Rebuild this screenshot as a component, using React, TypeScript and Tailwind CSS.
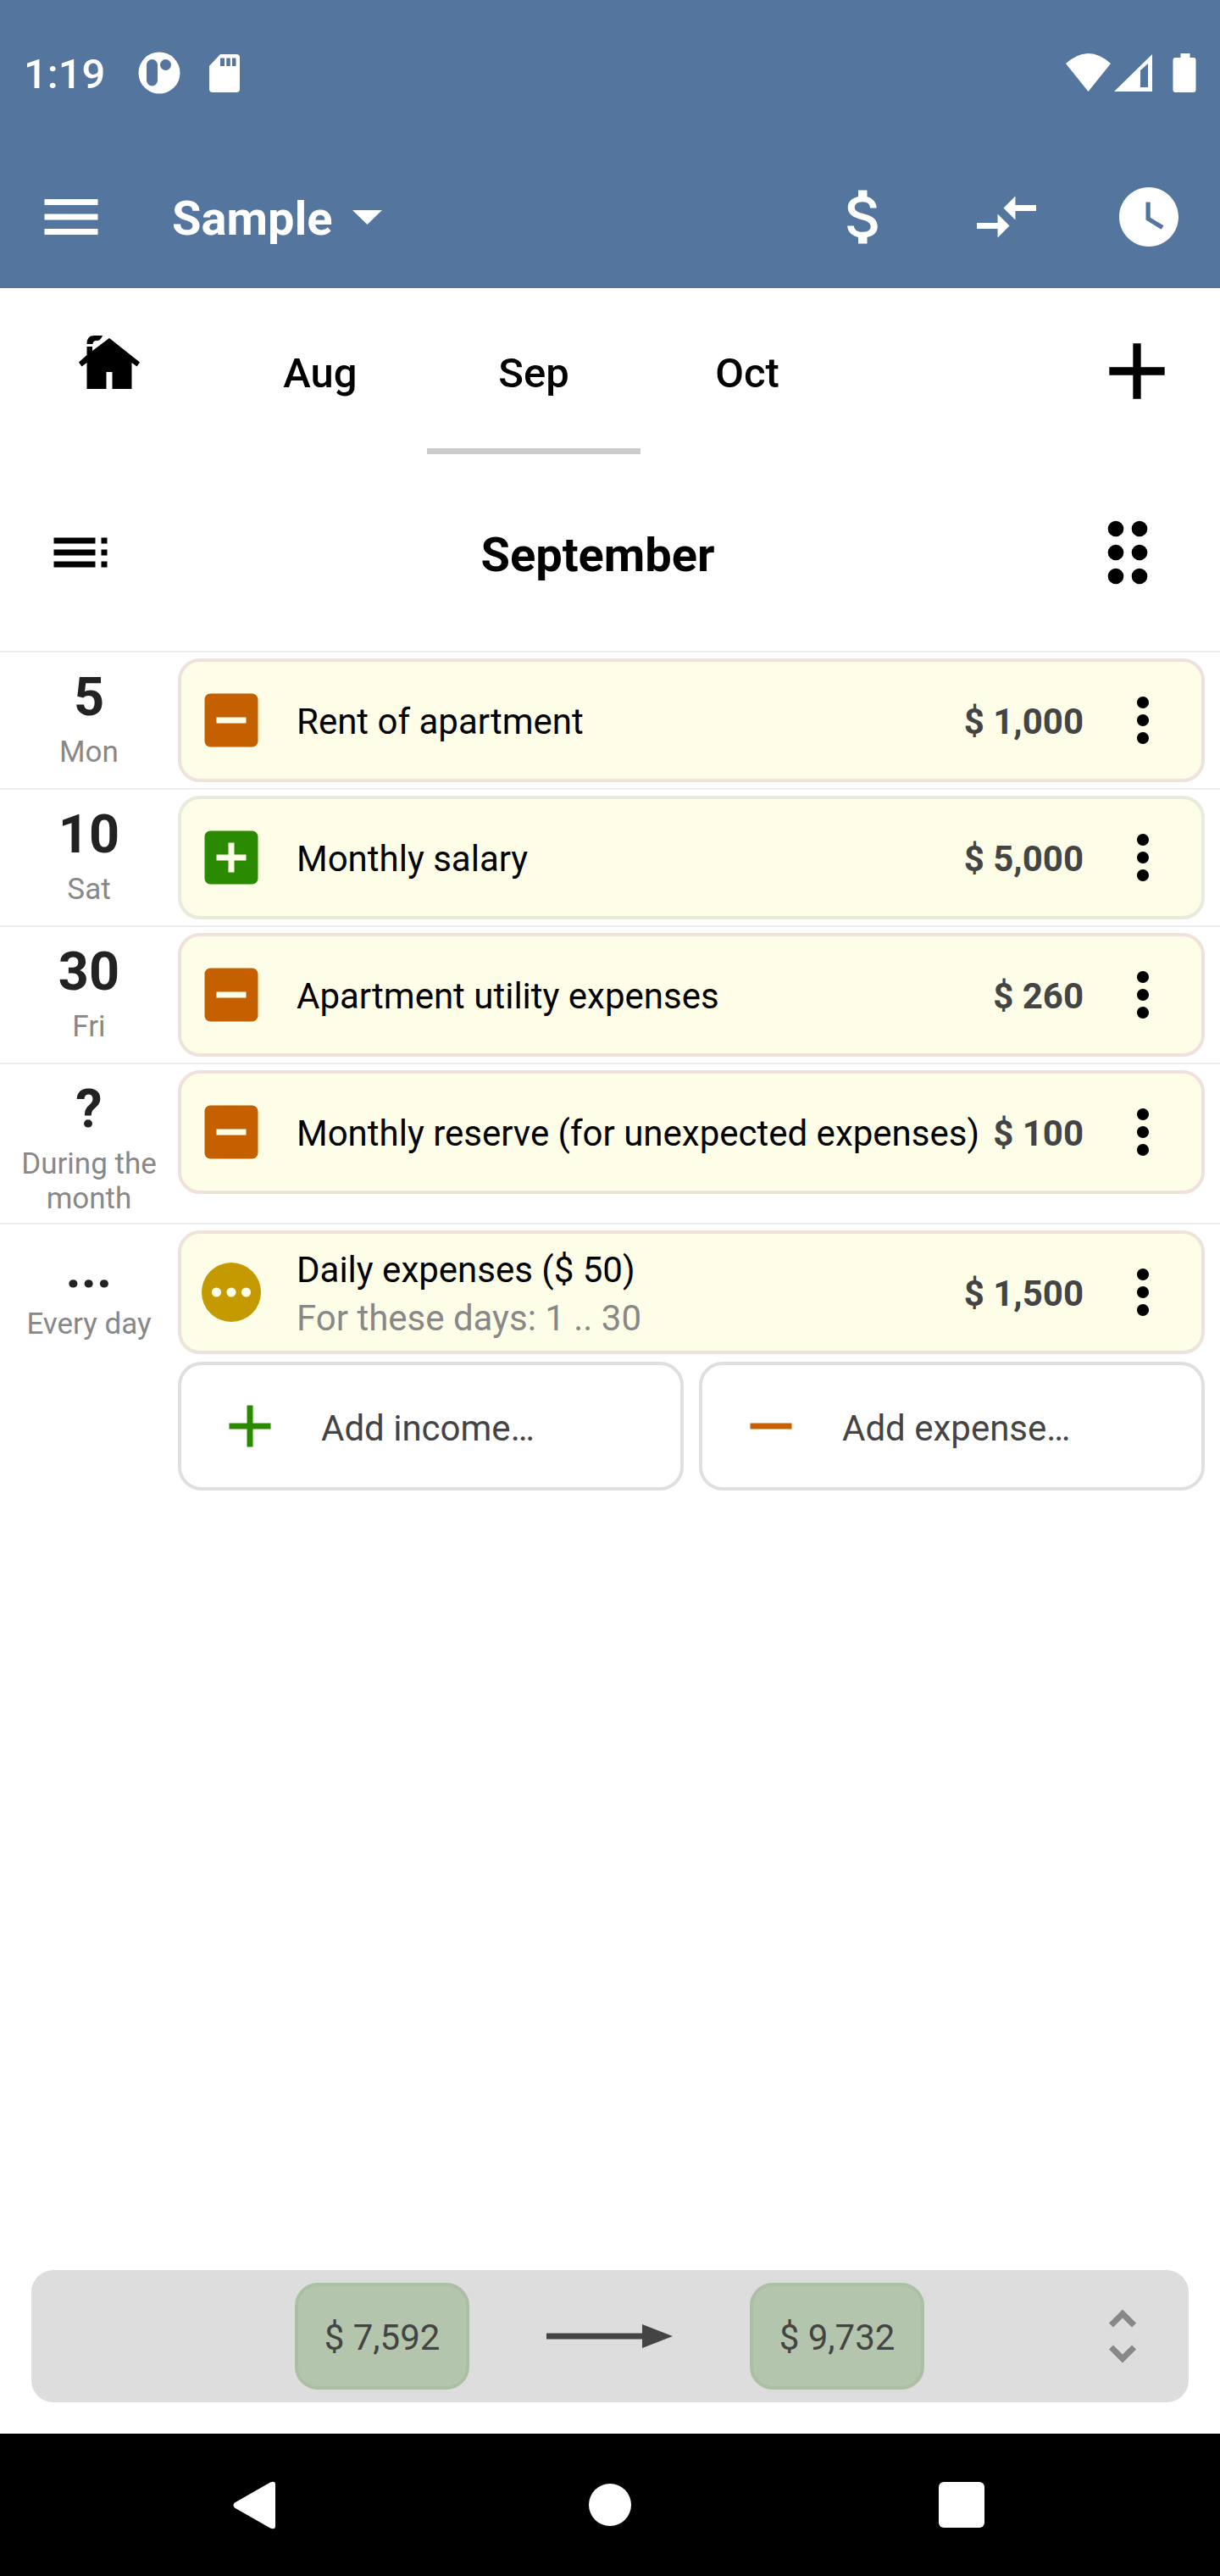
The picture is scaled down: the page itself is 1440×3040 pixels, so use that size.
import React, { ReactNode } from 'react'

interface Entry {
  day: string
  label: string
  title: string
  note?: string
  amount: string
  kind: 'income' | 'expense' | 'daily'
}

const entries: Entry[] = [
  { day: '5', label: 'Mon', title: 'Rent of apartment', amount: '$ 1,000', kind: 'expense' },
  { day: '10', label: 'Sat', title: 'Monthly salary', amount: '$ 5,000', kind: 'income' },
  { day: '30', label: 'Fri', title: 'Apartment utility expenses', amount: '$ 260', kind: 'expense' },
  { day: '?', label: 'During the month', title: 'Monthly reserve (for unexpected expenses)', amount: '$ 100', kind: 'expense' },
  { day: '...', label: 'Every day', title: 'Daily expenses ($ 50)', note: 'For these days: 1 .. 30', amount: '$ 1,500', kind: 'daily' },
]

const Icon = ({ d, className = 'size-[84px]' }: { d: string, className?: string }) => (
  <svg className={`shrink-0 fill-current ${className}`} viewBox="0 0 24 24"><path d={d} /></svg>
)

const StatusBar = () => (
  <div className="flex h-[172px] items-center justify-between pl-[28px] pr-[28px] text-[49px] font-medium leading-none">
    <div className="flex items-center">
      <span className="w-[135px] pt-[3px]">1:19</span>
      <svg className="size-[50px]" viewBox="0 0 50 50">
        <path fill="currentColor" fillRule="evenodd" d="M25 .5a24.5 24.5 0 1 0 0 49a24.5 24.5 0 1 0 0-49zM16.500 9a6.500 6.500 0 0 1 6.500 6.500v18.500a6.500 6.500 0 0 1-13 0v-18.500a6.500 6.500 0 0 1 6.500-6.500zM32.500 9a6.500 6.500 0 1 1 0 13a6.500 6.500 0 1 1 0-13z" />
      </svg>
      <svg className="ml-[34px] h-[45px] w-[36px]" viewBox="0 0 36 45">
        <path fill="currentColor" fillRule="evenodd" d="M13 0h19a4 4 0 0 1 4 4v37a4 4 0 0 1-4 4H4a4 4 0 0 1-4-4V14zM13 4.500v9.500h5v-9.500zM20.300 4.500v9.500h4.500v-9.500zM27 4.500v9.500h4.500v-9.500z" />
      </svg>
    </div>
    <svg className="h-[46px] w-[154px]" viewBox="0 0 154 46">
      <path fill="currentColor" d="M0 12Q26.500-12 53 12L26.500 45z" />
      <path fill="currentColor" fillRule="evenodd" d="M57 45L102 1v44zM88 20v20h9V12z" />
      <path fill="currentColor" d="M135.500 0h11v5h4a3 3 0 0 1 3 3v35a3 3 0 0 1-3 3h-21a3 3 0 0 1-3-3v-35a3 3 0 0 1 3-3h6z" />
    </svg>
  </div>
)

const AppBar = () => (
  <div className="flex h-[168px] items-center pl-[42px] pr-[42px]">
    <Icon d="M3 18h18v-2H3v2zm0-5h18v-2H3v2zm0-7v2h18V6H3z" />
    <span className="ml-[77px] pt-[4px] text-[56px] font-bold leading-none">Sample</span>
    <svg className="ml-[23px] h-[17px] w-[35px] fill-current" viewBox="0 0 35 17"><path d="M0 0h35L17.500 17z" /></svg>
    <div className="ml-auto flex gap-[84px]">
      <Icon d="M11.800 10.900c-2.270-.590-3-1.200-3-2.150 0-1.090 1.010-1.850 2.700-1.850 1.780 0 2.440.850 2.500 2.100h2.210c-.070-1.720-1.120-3.300-3.210-3.810V3h-3v2.160c-1.940.420-3.500 1.680-3.500 3.610 0 2.310 1.910 3.460 4.700 4.130 2.500.600 3 1.480 3 2.410 0 .690-.490 1.790-2.700 1.790-2.060 0-2.870-.920-2.980-2.100h-2.200c.120 2.190 1.760 3.420 3.680 3.830V21h3v-2.150c1.950-.370 3.500-1.500 3.500-3.550 0-2.840-2.430-3.810-4.700-4.400z" />
      <Icon d="M9.010 14H2v2h7.010v3L13 15l-3.990-4v3zm5.980-1v-3H22V8h-7.010V5L11 9l3.990 4z" />
      <Icon d="M12 2C6.500 2 2 6.500 2 12s4.500 10 10 10 10-4.500 10-10S17.500 2 12 2zm4.200 14.200L11 13V7h1.500v5.200l4.500 2.700-.8 1.300z" />
    </div>
  </div>
)

const Tabs = () => (
  <div className="flex h-[196px] text-[49px] font-medium leading-none text-black">
    <div className="flex w-[252px] justify-center pl-[6px] pt-[56px]">
      <svg className="h-[63px] w-[72px]" viewBox="0 0 72 63">
        <path d="M36 3L72 31.500l-3.500 5L62.500 32v31H39.500V43h-7v20H9.500V32L3.500 36.500 0 31.500 9.500 23V13h6.500v5z" />
        <path d="M9.500 10C9.500 3 13 0 18 0h10c-2 5-4 6-7 6-3 0-4 1-4.500 4z" />
      </svg>
    </div>
    {['Aug', 'Sep', 'Oct'].map(name => (
      <div key={name} className={`w-[252px] border-b-[7px] pt-[76px] text-center ${name === 'Sep' ? 'border-[#cccccc]' : 'border-transparent'}`}>{name}</div>
    ))}
    <Icon className="ml-auto mr-[42px] mt-[42px] size-[112px]" d="M19 13h-6v6h-2v-6H5v-2h6V5h2v6h6v2z" />
  </div>
)

const MonthTitle = () => (
  <div className="flex h-[232px] items-center pl-[53px] pr-[67px]">
    <Icon d="M3 9h14V7H3v2zm0 4h14v-2H3v2zm0 4h14v-2H3v2zm16 0h2v-2h-2v2zm0-10v2h2V7h-2zm0 6h2v-2h-2v2z" />
    <h1 className="flex-1 pr-[15px] pt-[5px] text-center text-[56px] font-bold leading-none">September</h1>
    <svg className="h-[76px] w-[84px]" viewBox="0 0 84 76">
      {[10, 38, 66].map(y => (
        <React.Fragment key={y}>
          <circle cx="28" cy={y} r="9.300" />
          <circle cx="56" cy={y} r="9.300" />
        </React.Fragment>
      ))}
    </svg>
  </div>
)

const KindIcon = ({ kind }: { kind: Entry['kind'] }) => {
  if (kind === 'daily') {
    return <Icon className="size-[84px] text-[#c49a00]" d="M12 2a10 10 0 1 0 0 20a10 10 0 1 0 0-20zM7 10.400a1.600 1.600 0 1 1 0 3.200a1.600 1.600 0 1 1 0-3.200zM12 10.400a1.600 1.600 0 1 1 0 3.200a1.600 1.600 0 1 1 0-3.200zM17 10.400a1.600 1.600 0 1 1 0 3.200a1.600 1.600 0 1 1 0-3.200z" />
  }
  if (kind === 'income') {
    return <Icon className="size-[84px] text-[#2a8a00]" d="M19 3H5c-1.110 0-2 .9-2 2v14c0 1.100.89 2 2 2h14c1.100 0 2-.9 2-2V5c0-1.100-.9-2-2-2zm-2 10h-4v4h-2v-4H7v-2h4V7h2v4h4v2z" />
  }
  return <Icon className="size-[84px] text-[#c46000]" d="M19 3H5c-1.110 0-2 .9-2 2v14c0 1.100.89 2 2 2h14c1.100 0 2-.9 2-2V5c0-1.100-.9-2-2-2zm-2 10H7v-2h10v2z" />
}

const EntryRow = ({ entry }: { entry: Entry }) => (
  <div className="flex border-t-2 border-[#ececec] pb-[7px] pt-[7px]">
    <div className="w-[210px] px-4 pb-px pt-[9px] text-center">
      <div className="text-[63px] font-bold leading-[74px] text-[#222222]">{entry.day}</div>
      <div className="mt-[7px] text-[35px] leading-[41px] text-[#888888]">{entry.label}</div>
    </div>
    <div className={`flex h-[146px] w-[1212px] items-center rounded-[26px] border-4 bg-[#fefee8] pl-[17px] ${entry.kind === 'income' ? 'border-[#e6ebdc]' : 'border-[#efe2da]'}`}>
      <KindIcon kind={entry.kind} />
      <div className="ml-[35px] flex-1 whitespace-nowrap pt-[3px] text-[42px] leading-[49px]">
        <div>{entry.title}</div>
        {entry.note && <div className="mt-[8px] text-[#888888]">{entry.note}</div>}
      </div>
      <span className="pt-[3px] text-[42px] font-bold leading-[49px] text-[#444444]">{entry.amount}</span>
      <Icon className="ml-[28px] mr-[27px] size-[84px]" d="M12 8c1.100 0 2-.9 2-2s-.9-2-2-2-2 .9-2 2 .9 2 2 2zm0 2c-1.100 0-2 .9-2 2s.9 2 2 2 2-.9 2-2-.9-2-2-2zm0 6c-1.100 0-2 .9-2 2s.9 2 2 2 2-.9 2-2-.9-2-2-2z" />
    </div>
  </div>
)

const AddButton = ({ icon, children }: { icon: ReactNode, children: ReactNode }) => (
  <button type="button" className="flex h-[152px] flex-1 items-center rounded-[28px] border-4 border-[#dfdfdf] bg-white pl-[39px] text-[42px] leading-[49px] text-[#444444]">
    {icon}
    <span className="ml-[42px] pt-[4px]">{children}</span>
  </button>
)

const Balance = ({ children }: { children: ReactNode }) => (
  <div className="flex h-[126px] w-[206px] items-center justify-center rounded-[27px] border-4 border-[#abbfa3] bg-[#b4c5ad] pt-[2px]">{children}</div>
)

export default () => (
  <div className="flex h-[3040px] w-[1440px] flex-col bg-white font-[Roboto,sans-serif] text-black">
    <header className="h-[340px] bg-[#54759e] text-white">
      <StatusBar />
      <AppBar />
    </header>
    <Tabs />
    <MonthTitle />
    <main className="flex-1">
      {entries.map(entry => <EntryRow key={entry.title} entry={entry} />)}
      <div className="ml-[210px] mr-[18px] mt-[2px] flex gap-[18px]">
        <AddButton icon={<Icon className="size-[84px] text-[#2a8a00]" d="M19 13h-6v6h-2v-6H5v-2h6V5h2v6h6v2z" />}>Add income…</AddButton>
        <AddButton icon={<Icon className="size-[84px] text-[#c46000]" d="M19 13H5v-2h14v2z" />}>Add expense…</AddButton>
      </div>
    </main>
    <div className="mx-[37px] mb-[37px] flex h-[156px] items-center rounded-[26px] bg-[#dddddd] pl-[311px] text-[42px] leading-[49px] text-[#444444]">
      <Balance>$ 7,592</Balance>
      <svg className="mx-[91px] h-[28px] w-[149px] fill-current" viewBox="0 0 149 28"><path d="M0 10.500h113V0l36 14-36 14V17.500H0z" /></svg>
      <Balance>$ 9,732</Balance>
      <Icon className="ml-auto mr-[36px] size-[84px] text-[#888888]" d="M12 5.830L15.170 9l1.410-1.410L12 3 7.410 7.590 8.830 9 12 5.830zm0 12.340L8.830 15l-1.410 1.410L12 21l4.590-4.590L15.170 15 12 18.170z" />
    </div>
    <nav className="flex h-[168px] items-center bg-black pl-[275px] text-white">
      <svg className="h-[57px] w-[50px] fill-current" viewBox="0 0 50 57"><path d="M2 25.500L44 1.500Q50-1 50 4v49Q50 58 44 55.500L2 31.500Q-1 28.500 2 25.500z" /></svg>
      <div className="ml-[370px] size-[50px] rounded-full bg-white" />
      <div className="ml-[363px] size-[54px] rounded-[6px] bg-white" />
    </nav>
  </div>
)
